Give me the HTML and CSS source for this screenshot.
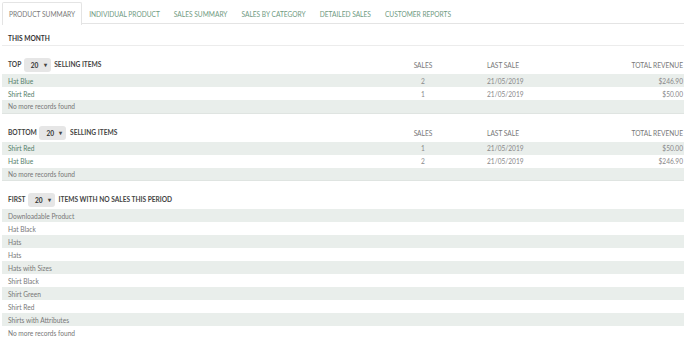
FILE: index.html
```html
<!DOCTYPE html>
<html>
<head>
<meta charset="utf-8">
<link rel="stylesheet" href="styles.css">
</head>
<body>
<div class="page">
  <nav class="tabs">
    <span class="tab active">PRODUCT SUMMARY</span>
    <span class="tab">INDIVIDUAL PRODUCT</span>
    <span class="tab">SALES SUMMARY</span>
    <span class="tab">SALES BY CATEGORY</span>
    <span class="tab">DETAILED SALES</span>
    <span class="tab">CUSTOMER REPORTS</span>
  </nav>
  <div class="period">THIS MONTH</div>

  <table class="report">
    <colgroup><col class="c-name"><col class="c-sales"><col class="c-date"><col class="c-rev"></colgroup>
    <thead>
      <tr>
        <th class="label">TOP <span class="select">20 <span class="caret">&#9662;</span></span> SELLING ITEMS</th>
        <th class="num">SALES</th>
        <th class="date">LAST SALE</th>
        <th class="rev">TOTAL REVENUE</th>
      </tr>
    </thead>
    <tbody>
      <tr class="odd"><td class="name">Hat Blue</td><td class="num">2</td><td class="date">21/05/2019</td><td class="rev">$246.90</td></tr>
      <tr><td class="name">Shirt Red</td><td class="num">1</td><td class="date">21/05/2019</td><td class="rev">$50.00</td></tr>
      <tr class="odd last"><td class="plain">No more records found</td><td></td><td></td><td></td></tr>
    </tbody>
  </table>

  <table class="report">
    <colgroup><col class="c-name"><col class="c-sales"><col class="c-date"><col class="c-rev"></colgroup>
    <thead>
      <tr>
        <th class="label">BOTTOM <span class="select">20 <span class="caret">&#9662;</span></span> SELLING ITEMS</th>
        <th class="num">SALES</th>
        <th class="date">LAST SALE</th>
        <th class="rev">TOTAL REVENUE</th>
      </tr>
    </thead>
    <tbody>
      <tr class="odd"><td class="name">Shirt Red</td><td class="num">1</td><td class="date">21/05/2019</td><td class="rev">$50.00</td></tr>
      <tr><td class="name">Hat Blue</td><td class="num">2</td><td class="date">21/05/2019</td><td class="rev">$246.90</td></tr>
      <tr class="odd last"><td class="plain">No more records found</td><td></td><td></td><td></td></tr>
    </tbody>
  </table>

  <table class="report">
    <colgroup><col class="c-name"><col class="c-sales"><col class="c-date"><col class="c-rev"></colgroup>
    <thead>
      <tr>
        <th class="label" colspan="4">FIRST <span class="select">20 <span class="caret">&#9662;</span></span> ITEMS WITH NO SALES THIS PERIOD</th>
      </tr>
    </thead>
    <tbody>
      <tr class="odd"><td class="plain" colspan="4">Downloadable Product</td></tr>
      <tr><td class="plain" colspan="4">Hat Black</td></tr>
      <tr class="odd"><td class="plain" colspan="4">Hats</td></tr>
      <tr><td class="plain" colspan="4">Hats</td></tr>
      <tr class="odd"><td class="plain" colspan="4">Hats with Sizes</td></tr>
      <tr><td class="plain" colspan="4">Shirt Black</td></tr>
      <tr class="odd"><td class="plain" colspan="4">Shirt Green</td></tr>
      <tr><td class="plain" colspan="4">Shirt Red</td></tr>
      <tr class="odd"><td class="plain" colspan="4">Shirts with Attributes</td></tr>
      <tr><td class="plain" colspan="4">No more records found</td></tr>
    </tbody>
  </table>
</div>
</body>
</html>
```
FILE: styles.css
```css
* { box-sizing: border-box; }
html, body { margin: 0; padding: 0; background: #fff; }
body {
  font-family: Lato, "Open Sans", sans-serif;
  font-size: 6.6px;
  color: #777;
  overflow: hidden;
}
.page {
  width: 686px;
  padding: 0 2px;
}
.tabs {
  display: flex;
  height: 24px;
  padding-top: 2px;
  border-bottom: 1px solid #e4e4e4;
}
.tab {
  display: flex;
  align-items: center;
  padding: 0 6px;
  border: 1px solid transparent;
  border-bottom: none;
  color: #6f9a7f;
  height: 22px;
}
.tab.active {
  color: #7a7a7a;
  background: #fff;
  border-color: #e4e4e4;
  border-radius: 2px 2px 0 0;
  height: 23px;
  margin-bottom: -1px;
}
.period {
  height: 22px;
  padding: 10px 0 0 6px;
  font-weight: 700;
  color: #333;
  border-bottom: 1px solid #ececec;
}
.report {
  width: 682px;
  margin-top: 10px;
  border-collapse: collapse;
  table-layout: fixed;
}
.c-name { width: 396px; }
.c-sales { width: 50px; }
.c-date { width: 160px; }
.c-rev { width: 76px; }
th {
  height: 18px;
  font-weight: 400;
  color: #777;
  padding: 0;
  vertical-align: middle;
}
th.label {
  text-align: left;
  padding-left: 6px;
  color: #444;
  font-weight: 700;
}
.select {
  display: inline-block;
  width: 27px;
  height: 14px;
  line-height: 14px;
  margin: 0 2px 0 1px;
  padding-left: 7px;
  background: #e6e6e6;
  border-radius: 3px;
  color: #333;
  font-weight: 700;
  position: relative;
  vertical-align: middle;
}
.caret {
  position: absolute;
  right: 4px;
  top: 0;
  font-size: 6px;
  color: #444;
}
td {
  height: 13px;
  padding: 0;
  vertical-align: middle;
  color: #888;
}
tr.odd td { background: #e9eeeb; }
tr.last td { border-bottom: 1px solid #dfe4e1; }
td.name { padding-left: 6px; color: #55806a; }
td.plain { padding-left: 6px; color: #777; }
.num { text-align: center; }
.date { text-align: left; padding-left: 39px; }
.rev { text-align: right; padding-right: 1px; }
```
